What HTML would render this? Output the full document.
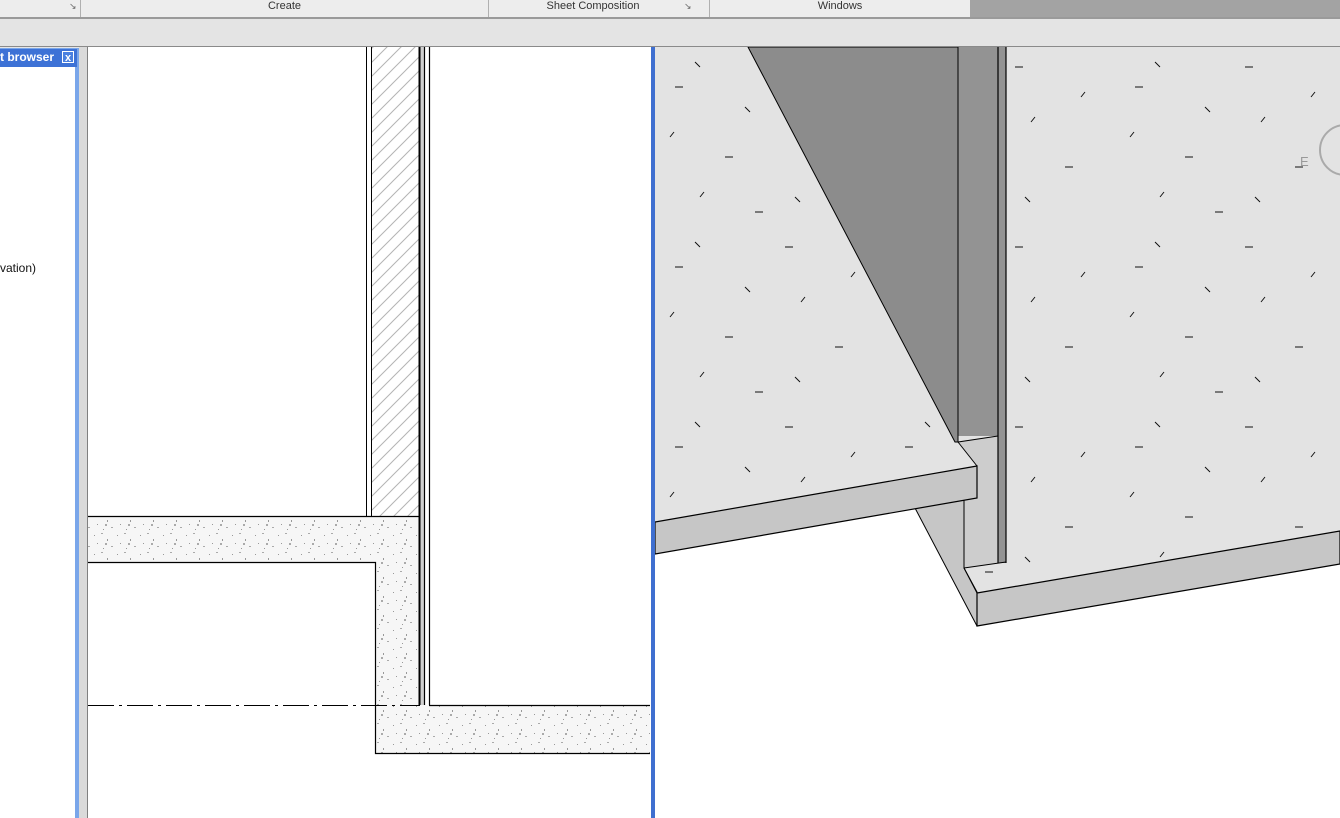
<!DOCTYPE html>
<html><head><meta charset="utf-8"><style>
html,body{margin:0;padding:0;width:1340px;height:818px;overflow:hidden;background:#e6e6e6;font-family:"Liberation Sans",sans-serif}
.abs{position:absolute}
</style></head><body>
<div class="abs" style="left:0;top:0;width:1340px;height:818px">
<div class="abs" style="left:0;top:0;width:970px;height:17px;background:#ededed"></div>
<div class="abs" style="left:970px;top:0;width:370px;height:17px;background:#a3a3a3"></div>
<div class="abs" style="left:80px;top:0;width:1px;height:17px;background:#b0b0b0"></div>
<div class="abs" style="left:488px;top:0;width:1px;height:17px;background:#b0b0b0"></div>
<div class="abs" style="left:709px;top:0;width:1px;height:17px;background:#b0b0b0"></div>
<div class="abs" style="left:69px;top:1px;font-size:9px;color:#666">&#8600;</div>
<div class="abs" style="left:684px;top:1px;font-size:9px;color:#666">&#8600;</div>
<div class="abs" style="left:81px;top:0;width:407px;text-align:center;font-size:11px;color:#333;line-height:13px">Create</div>
<div class="abs" style="left:489px;top:0;width:208px;text-align:center;font-size:11px;color:#333;line-height:13px">Sheet Composition</div>
<div class="abs" style="left:710px;top:0;width:260px;text-align:center;font-size:11px;color:#333;line-height:13px">Windows</div>
<div class="abs" style="left:0;top:17px;width:1340px;height:2px;background:#9a9a9a"></div>
<div class="abs" style="left:0;top:19px;width:1340px;height:27px;background:#e4e4e4"></div>
<div class="abs" style="left:0;top:46px;width:1340px;height:1px;background:#8a8a8a"></div>
<div class="abs" style="left:0;top:48px;width:79px;height:770px;background:#7aa6ea"></div>
<div class="abs" style="left:0;top:49px;width:77px;height:18px;background:#3d72d6"></div>
<div class="abs" style="left:0;top:50px;font-size:12px;font-weight:bold;color:#fff;line-height:15px">t browser</div>
<div class="abs" style="left:62px;top:51px;width:12px;height:12px;border:1px solid #fff;background:#4a80e0;color:#fff;font-size:11px;font-weight:bold;line-height:12px;text-align:center;box-sizing:border-box">x</div>
<div class="abs" style="left:0;top:67px;width:75px;height:751px;background:#fff"></div>
<div class="abs" style="left:0;top:261px;font-size:12px;color:#111">vation)</div>
<div class="abs" style="left:79px;top:47px;width:8px;height:771px;background:#dadada"></div>
<div class="abs" style="left:87px;top:47px;width:1px;height:771px;background:#808080"></div>
<svg class="abs" style="left:88px;top:47px" width="563" height="771" viewBox="88 47 563 771">
<defs>
<pattern id="sp" width="23" height="19" patternUnits="userSpaceOnUse">
<rect width="23" height="19" fill="#f6f6f6"/>
<rect x="2" y="3" width="1" height="1" fill="#999"/><rect x="9" y="1" width="2" height="1" fill="#aaa"/>
<rect x="15" y="7" width="1" height="2" fill="#999"/><rect x="5" y="11" width="1" height="1" fill="#999"/>
<rect x="19" y="14" width="2" height="1" fill="#aaa"/><rect x="11" y="16" width="1" height="1" fill="#999"/>
<rect x="13" y="11" width="2" height="2" fill="#aaa"/>
</pattern>
<pattern id="hat" width="14" height="14" patternUnits="userSpaceOnUse">
<rect width="14" height="14" fill="#fff"/><path d="M-2,16 L16,-2 M-2,2 L2,-2 M12,16 L16,12" stroke="#b4b4b4" stroke-width="1"/>
</pattern>
</defs>
<rect x="88" y="47" width="563" height="771" fill="#fff"/>
<rect x="371" y="47" width="48" height="469" fill="url(#hat)"/>
<rect x="420" y="47" width="4" height="658" fill="#d0d0d0"/>
<path d="M88,516 H419 V705 H650 V753 H375 V562 H88 Z" fill="url(#sp)"/>
<g stroke="#000" fill="none">
<path d="M366.5,47 V516 M371.5,47 V516" stroke-width="1"/>
<path d="M419.5,47 V705" stroke-width="2"/>
<path d="M424.5,47 V705 M429.5,47 V705" stroke-width="1.2"/>
<path d="M88,516.5 H419 M88,562.5 H375.5 V753.5 H650 M429,705.5 H650" stroke-width="1.2"/>
<path d="M88,705.5 H420" stroke-width="1" stroke-dasharray="26,5,3,5"/>
</g>
</svg>
<div class="abs" style="left:651px;top:47px;width:4px;height:771px;background:#3f6fd0"></div>
<svg class="abs" style="left:655px;top:47px" width="685" height="771" viewBox="655 47 685 771">
<defs>
<pattern id="ds" width="230" height="180" patternUnits="userSpaceOnUse" x="655" y="47">
<rect width="230" height="180" fill="#e3e3e3"/>
<g stroke="#111" stroke-width="1">
<path d="M20,40 h8 M130,20 h8 M70,110 h8 M180,120 h8 M100,165 h8"/>
<path d="M40,15 l5,5 M150,70 l-4,5 M15,90 l4,-5 M90,60 l5,5 M200,45 l-4,5 M140,150 l5,5 M45,150 l4,-5"/>
</g>
</pattern>
</defs>
<rect x="655" y="47" width="685" height="771" fill="url(#ds)"/>
<path d="M655,554 L915,508 L977,626 L1340,564 V818 H655 Z" fill="#fff"/>
<path d="M915,508 L964,499 L964,568 L977,592 L977,626 Z" fill="#c6c6c6" stroke="#000" stroke-width="1"/>
<path d="M958,442 L998,436 L998,563 L964,568 L964,499 L977,498 L977,466 Z" fill="#cdcdcd"/>
<path d="M964,499 V568" stroke="#000"/>
<path d="M748,47 L958,47 L958,442 L955,442 Z" fill="#8c8c8c" stroke="#000" stroke-width="1"/>
<rect x="958" y="47" width="40" height="389" fill="#939393"/>
<path d="M958,47 V442 L998,436" stroke="#000" fill="none"/>
<rect x="998" y="47" width="8" height="516" fill="#939393"/>
<path d="M998,47 V563 M1006,47 V563" stroke="#000" stroke-width="1.2"/>
<path d="M655,522 L977,466 L977,498 L655,554 Z" fill="#c6c6c6" stroke="#000" stroke-width="1.2"/>
<path d="M958,442 L977,466" stroke="#000"/>
<path d="M964,568 L1006,562 M964,568 L977,593" stroke="#000"/>
<path d="M977,593 L1340,531 L1340,564 L977,626 Z" fill="#c6c6c6" stroke="#000" stroke-width="1.2"/>
<circle cx="1345" cy="150" r="25" fill="none" stroke="#aaa" stroke-width="2"/>
<text x="1300" y="166" font-size="13" fill="#999" font-family="Liberation Sans">E</text>
</svg>
</div>
</body></html>
